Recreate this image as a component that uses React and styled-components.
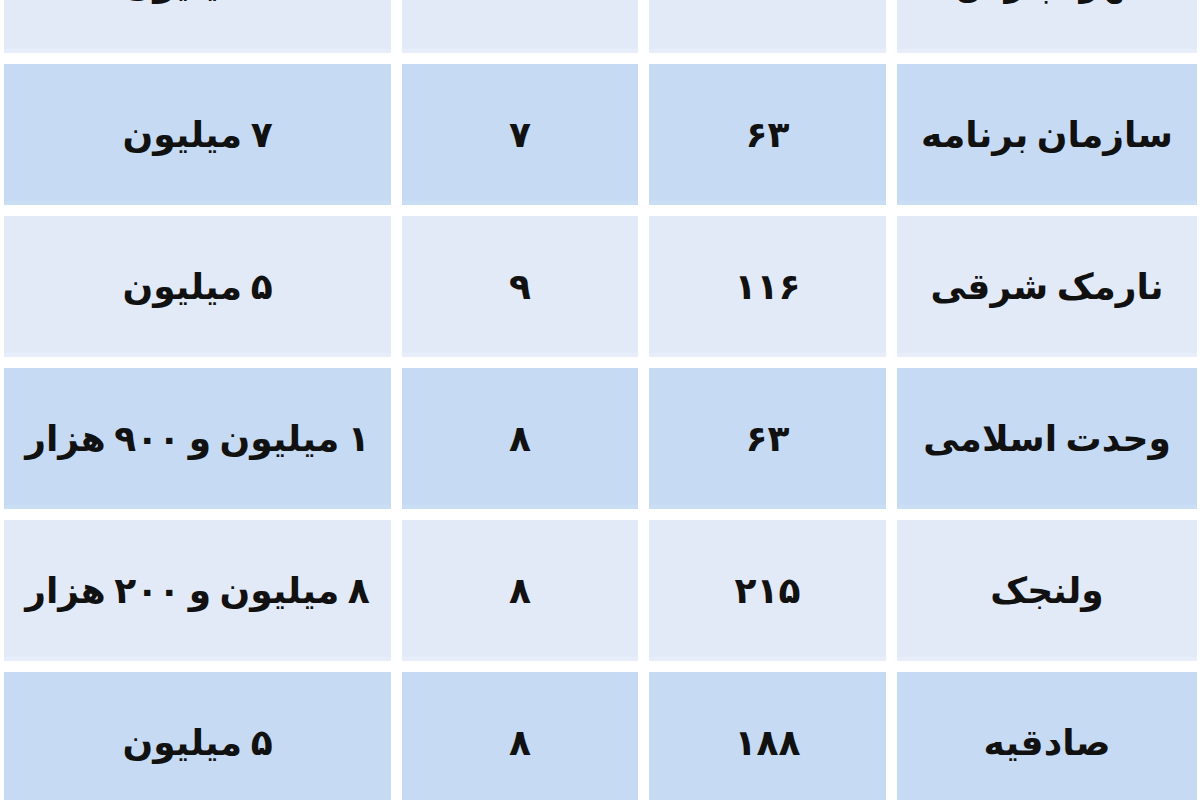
import React from 'react'
import styled, { createGlobalStyle } from 'styled-components'

const GlobalStyle = createGlobalStyle`
  html, body {
    margin: 0;
    padding: 0;
    background: #ffffff;
    overflow: hidden;
  }
`

const Page = styled.div`
  width: 1200px;
  height: 800px;
  overflow: hidden;
  background: #ffffff;
`

const Table = styled.div`
  direction: rtl;
  display: grid;
  grid-template-columns: 300px 237px 236px 387px;
  grid-auto-rows: 141px;
  column-gap: 11px;
  row-gap: 11px;
  padding: 0 3px;
  margin-top: -88px;
  font-family: 'DejaVu Sans', 'Noto Sans', sans-serif;
`

const Cell = styled.div`
  display: flex;
  align-items: center;
  justify-content: center;
  background: ${(p) => (p.$blue ? '#c6dbf3' : '#e3eaf7')};
  box-shadow: inset 0 -4px 0 ${(p) => (p.$blue ? '#c9ddf3' : '#e8eef9')};
  color: #111111;
  font-size: 36px;
  font-weight: bold;
  word-spacing: -4px;
  white-space: nowrap;
`

const rows = [
  ['تهرانپارس', '۸۹', '۶', '۶ میلیون'],
  ['سازمان برنامه', '۶۳', '۷', '۷ میلیون'],
  ['نارمک شرقی', '۱۱۶', '۹', '۵ میلیون'],
  ['وحدت اسلامی', '۶۳', '۸', '۱ میلیون و ۹۰۰ هزار'],
  ['ولنجک', '۲۱۵', '۸', '۸ میلیون و ۲۰۰ هزار'],
  ['صادقیه', '۱۸۸', '۸', '۵ میلیون'],
]

const App = () => {
  return (
    <Page>
      <GlobalStyle />
      <Table>
        {rows.map((row, i) =>
          row.map((text, j) => (
            <Cell key={`${i}-${j}`} $blue={i % 2 === 1}>
              {text}
            </Cell>
          ))
        )}
      </Table>
    </Page>
  )
}

export default App
